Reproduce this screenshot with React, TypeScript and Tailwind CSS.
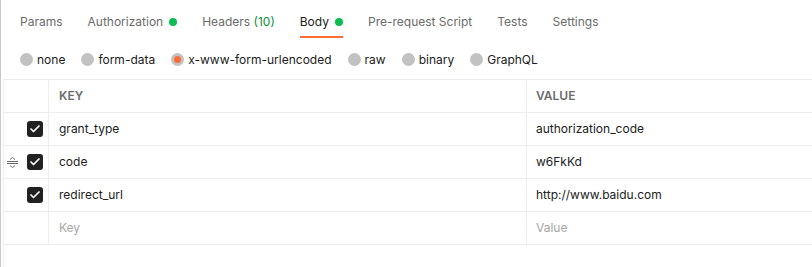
import { Check } from 'lucide-react';

interface Row {
  key: string;
  value: string;
  handle?: boolean;
}

const tabs = [
  { label: 'Params' },
  { label: 'Authorization', dot: true },
  { label: 'Headers', count: '(10)' },
  { label: 'Body', dot: true, active: true },
  { label: 'Pre-request Script' },
  { label: 'Tests' },
  { label: 'Settings' },
];

const bodyTypes = ['none', 'form-data', 'x-www-form-urlencoded', 'raw', 'binary', 'GraphQL'];

const rows: Row[] = [
  { key: 'grant_type', value: 'authorization_code' },
  { key: 'code', value: 'w6FkKd', handle: true },
  { key: 'redirect_url', value: 'http://www.baidu.com' },
];

function Handle() {
  return (
    <svg width="11" height="11" viewBox="0 0 11 11" className="text-[#6b6b6b]">
      <path d="M0 4.5h11M0 6.5h11" stroke="currentColor" strokeWidth="1" />
      <path d="M3 2.5l2.5-2 2.5 2M3 8.5l2.5 2 2.5-2" stroke="currentColor" strokeWidth="1" fill="none" />
    </svg>
  );
}

export default function App() {
  return (
    <div
      className="w-[812px] h-[267px] bg-white border-l border-[#c8c8c8] overflow-hidden text-[12px] text-[#212121]"
      style={{ fontFamily: 'Inter, "Noto Sans", sans-serif' }}
    >
      {/* tabs */}
      <div className="flex items-start h-[39px] pl-[19px] pt-[14px] gap-[25px]">
        {tabs.map((t) => (
          <div key={t.label} className="flex flex-col">
            <div className={`flex items-center gap-[6px] leading-[16px] ${t.active ? 'text-[#212121]' : 'text-[#6b6b6b]'}`}>
              <span>
                {t.label}
                {t.count && <span className="text-[#0a8f3c]"> {t.count}</span>}
              </span>
              {t.dot && <span className="w-[8px] h-[8px] rounded-full bg-[#0cbb52]" />}
            </div>
            {t.active && <div className="mt-[6px] h-[2px] bg-[#ff6c37]" />}
          </div>
        ))}
      </div>

      {/* body types */}
      <div className="flex items-center h-[40px] pl-[19px] gap-[16px] text-[12px] pt-[1px]">
        {bodyTypes.map((b) => (
          <label key={b} className="flex items-center gap-[4px]">
            <span className="w-[13px] h-[13px] rounded-full bg-[#c2c2c2] flex items-center justify-center">
              {b === 'x-www-form-urlencoded' && <span className="w-[7px] h-[7px] rounded-full bg-[#ff6c37]" />}
            </span>
            <span>{b}</span>
          </label>
        ))}
      </div>

      {/* table */}
      <div className="ml-[2px] border-l border-[#ededed] h-full">
        <div className="grid grid-cols-[45px_478px_1fr] border-t border-[#ededed]">
          <div className="h-[33px] border-b border-r border-[#ededed]" />
          <div className="h-[33px] border-b border-r border-[#ededed] flex items-center pl-[10px] text-[12px] font-semibold text-[#6b6b6b]">
            KEY
          </div>
          <div className="h-[33px] border-b border-[#ededed] flex items-center pl-[9px] text-[12px] font-semibold text-[#6b6b6b]">
            VALUE
          </div>

          {rows.map((r) => (
            <div key={r.key} className="contents">
              <div className="h-[33px] border-b border-r border-[#ededed] flex items-center justify-end pr-[5px] gap-[9px]">
                {r.handle && <Handle />}
                <span className="w-[16px] h-[16px] rounded-[3px] bg-[#212121] flex items-center justify-center">
                  <Check size={12} strokeWidth={3.5} className="text-white" />
                </span>
              </div>
              <div className="h-[33px] border-b border-r border-[#ededed] flex items-center pl-[10px]">{r.key}</div>
              <div className="h-[33px] border-b border-[#ededed] flex items-center pl-[9px]">{r.value}</div>
            </div>
          ))}

          <div className="h-[33px] border-b border-r border-[#ededed]" />
          <div className="h-[33px] border-b border-r border-[#ededed] flex items-center pl-[10px] text-[#a6a6a6]">Key</div>
          <div className="h-[33px] border-b border-[#ededed] flex items-center pl-[9px] text-[#a6a6a6]">Value</div>
        </div>
      </div>
    </div>
  );
}
